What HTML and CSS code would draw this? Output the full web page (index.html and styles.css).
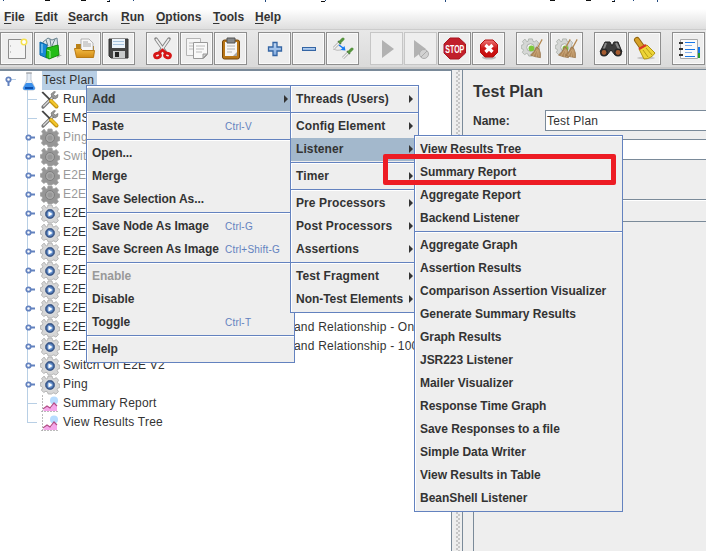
FILE: index.html
```html
<!DOCTYPE html>
<html lang="en">
<head>
<meta charset="utf-8">
<title>Test Plan</title>
<link rel="stylesheet" href="styles.css">
</head>
<body>
<svg class="defs" width="0" height="0">
  <defs>
    <radialGradient id="blue"><stop offset="0" stop-color="#b8d4f0"/><stop offset=".55" stop-color="#5f8ac6"/><stop offset="1" stop-color="#1d3668"/></radialGradient>
    <linearGradient id="plus" x2="0" y2="1"><stop offset="0" stop-color="#c5dbf5"/><stop offset="1" stop-color="#7fa9de"/></linearGradient>
    <linearGradient id="gold" x2="0" y2="1"><stop offset="0" stop-color="#f4bd45"/><stop offset="1" stop-color="#d18a14"/></linearGradient>
    <linearGradient id="red" x2="0" y2="1"><stop offset="0" stop-color="#ee7777"/><stop offset=".5" stop-color="#cd1717"/><stop offset="1" stop-color="#c60b0b"/></linearGradient>
    <symbol id="gearshape" viewBox="0 0 20 20"><path d="M8 1h4l.6 2.400 1.400.6 2.300-1.400 2.300 2.600-1.200 2 .7 1.500 1.700.4v3.400l-2 .7-.6 1.300 1.200 2.200-2.500 2.400-2.100-1.200-1.600.6L11.500 19h-3.300l-.8-2.100-1.500-.6-2.200 1.200-2.300-2.400 1.200-2.200-.6-1.300-1.700-.5v-3.400l1.800-.5.7-1.500-1.200-2.100 2.500-2.500L6.200 4l1.300-.6z"/></symbol>
    <symbol id="gear" viewBox="0 0 20 20"><use href="#gearshape" fill="#d6d6d6" stroke="#a8a8a8" stroke-width=".8"/><circle cx="10" cy="10" r="5.500" fill="#f0f0f0"/><circle cx="10" cy="10" r="4.700" fill="url(#blue)" stroke="#4a6389" stroke-width=".7"/><path d="M8.500 7.500v5l4-2.500z" fill="#fff"/></symbol>
    <symbol id="gearoff" viewBox="0 0 20 20"><use href="#gearshape" fill="#969696" stroke="#a4a4a4" stroke-width=".8"/><circle cx="10" cy="10" r="4.500" fill="#a8a8a8" stroke="#7f7f7f"/><circle cx="10" cy="10" r="2.500" fill="#989898"/></symbol>
    <symbol id="tools" viewBox="0 0 20 20"><path d="M3 17L13 7" stroke="#777" stroke-width="3.200" stroke-linecap="round"/><path d="M3.300 16.500L13 7" stroke="#ddd" stroke-width="1.200"/><path d="M12 7l-1-3 3-2.500 1.500.3-2 2.700 1.800 1.500 2.700-1.500-.5 3-2.500 1.500z" fill="#999" stroke="#666" stroke-width=".6"/><path d="M1.500 2.500l1.500-1 8 8-1.500 1z" fill="#444"/><path d="M11 11l5.500 5.500" stroke="#c29412" stroke-width="4" stroke-linecap="round"/><path d="M11 10.500l5.500 5.500" stroke="#f4c72c" stroke-width="2.300" stroke-linecap="round"/></symbol>
    <symbol id="flask" viewBox="0 0 20 20"><path d="M8 2h4v7l4 8q0 2-2 2H6q-2 0-2-2l4-8z" fill="#e6edf5" stroke="#adb9c8" stroke-width=".8"/><path d="M7 12h6l3 5q0 2-2 2H6q-2 0-2-2z" fill="#3b90ec"/><path d="M6 17h8" stroke="#0c4eac" stroke-width="2"/><path d="M7 2h6" stroke="#999"/></symbol>
    <symbol id="chart" viewBox="0 0 20 20"><circle cx="14" cy="6.500" r="4" fill="#b7dcff"/><path d="M3 17l4-5 4 2 3-5 3 3v5z" fill="#f5a5e9"/><path d="M3 15l4-3 3 2 4-5 3 3" stroke="#b34c86" stroke-width="1.200" fill="none"/><path d="M2.500 1v17.500M1 17.500h17" stroke="#a9a9a9" stroke-dasharray="2 1" stroke-width=".8"/></symbol>
    <symbol id="broom" viewBox="0 0 18 24"><path d="M17 1L11 12" stroke="#b4874f" stroke-width="1.500"/><path d="M10 10l3 2q3 6 2 11l-6-1-6-2q5-4 7-10z" fill="#b18a5b" stroke="#8b683e" stroke-width=".7"/><path d="M11 13l-5 8M12 13l-2 9M13 14v8" stroke="#dbb98b" stroke-width=".7"/></symbol>
    <symbol id="greygear" viewBox="0 0 20 20"><use href="#gearshape" fill="#d5d7d5" stroke="#b0b5b0"/><circle cx="10" cy="10" r="4" fill="#f3f3f3" stroke="#aaa"/><circle cx="11" cy="11" r="3" fill="#7cc83b"/></symbol>
    <symbol id="dropper" viewBox="0 0 12 12"><path d="M1 11l6-6" stroke="#aaa" stroke-width="2.800"/><path d="M1 11l6-6" stroke="#f3f3f3" stroke-width="1.200"/><path d="M5 4l3 3" stroke="#4f6c45" stroke-width="1.500"/><path d="M7 5l3-3" stroke="#57943f" stroke-width="3" stroke-linecap="round"/></symbol>
    <symbol id="knob" viewBox="0 0 11 7"><path d="M5 3.500h5" stroke="#6382bf" stroke-width="2"/><circle cx="3.500" cy="3.500" r="2.200" fill="#fff" stroke="#6382bf" stroke-width="1.800"/></symbol>
  </defs>
</svg>
<div class="window">
  <svg class="strip" viewBox="0 0 706 4"><path d="M45 .5h5M81 .5h5M107 1.500h3M321 1.500h4M550 .5h5M586 .5h5M612 1.500h3" stroke="#111"/><path d="M3.500 0v1M109.500 0v1M133.500 0v1M265.500 0v2M325.500 0v1M445.500 0v2M614.500 0v1M633.500 0v1M657.500 0v2" stroke="#234a80"/></svg>
  <nav class="menubar">
    <span class="m-file"><u>F</u>ile</span><span class="m-edit"><u>E</u>dit</span><span class="m-search"><u>S</u>earch</span><span class="m-run"><u>R</u>un</span><span class="m-options"><u>O</u>ptions</span><span class="m-tools"><u>T</u>ools</span><span class="m-help"><u>H</u>elp</span>
  </nav>
  <div class="toolbar">
    <div class="tools">
      <b><svg viewBox="0 0 33 33"><path d="M8.500 7.500h17v19h-17z" fill="#f4f4f4" stroke="#8d8d8d"/><path d="M10 14h1M10 20h1" stroke="#999"/><circle cx="24" cy="10" r="2.700" fill="#fff" stroke="#f6e14e" stroke-width="1.500"/></svg></b>
      <b><svg viewBox="0 0 33 33"><path d="M23 23h5l-5 3z" fill="#aaa"/><path d="M9 10l5-4 4 2 5-2 1 10H9z" fill="#dce4e8" stroke="#698390"/><path d="M12 8l2 6M16 7l1 7M21 7l-3 7" stroke="#66818c"/><path d="M6 10l7 3v13l-7-3z" fill="#1688d5" stroke="#0b67a7"/><path d="M8 12v9" stroke="#a6dcfa"/><path d="M13 16l11-3 1 10-10 4-3-2z" fill="#23bd17" stroke="#168b0d"/><path d="M13 18l3 1v7" stroke="#a5f494" fill="none"/></svg></b>
      <b><svg viewBox="0 0 33 33"><path d="M8 12h7l2 2h9v10H8z" fill="#b98116"/><path d="M13 7h8l4 4v10H13z" fill="#f7f7f7" stroke="#999" stroke-width=".7"/><path d="M15 10h5M15 12h8M15 14h8" stroke="#aaa"/><path d="M6.500 16.500h6l2 2h12l-1 7h-17z" fill="url(#gold)" stroke="#b87b15"/></svg></b>
      <b><svg viewBox="0 0 33 33"><path d="M7 7h19v19H9l-2-2z" fill="#454545" stroke="#333"/><path d="M10 7h13v9H10z" fill="#edf4fb"/><path d="M11 9.500h11M11 12.500h11" stroke="#a8c4df"/><path d="M11 19h12v7H11z" fill="#c9cbcc"/><path d="M13 20h4v5h-4z" fill="#242424"/></svg></b>
    </div>
    <div class="tools">
      <b><svg viewBox="0 0 33 33"><path d="M10 7l10 14M23 7L13 21" stroke="#858585" stroke-width="3.500" stroke-linecap="round"/><path d="M10 7l9 13M23 7l-9 13" stroke="#ededed" stroke-width="1.700"/><g fill="#ededed" stroke="#d61616" stroke-width="2.800"><ellipse cx="11.500" cy="23.500" rx="3" ry="2.200" transform="rotate(-20 11.500 23.500)"/><ellipse cx="21.500" cy="23.500" rx="3" ry="2.200" transform="rotate(20 21.500 23.500)"/></g><path d="M13 21l3.500-3 3.500 3" stroke="#d61616" stroke-width="2.500" fill="none"/></svg></b>
      <b><svg viewBox="0 0 33 33"><path d="M6.500 6.500h14v17h-14z" fill="#f5f5f5" stroke="#b4b4b4"/><path d="M13.500 10.500h14v12l-4 4h-10z" fill="#f9f9f9" stroke="#999"/><path d="M9 11h4M9 14h4M9 17h4M16 14h9M16 17h8M16 20h6" stroke="#bbb"/><path d="M27 22h-4v4z" fill="#d2d2d2" stroke="#999"/></svg></b>
      <b><svg viewBox="0 0 33 33"><rect x="8.500" y="8" width="17" height="19" rx="2" fill="#b97616" stroke="#73450b"/><path d="M11 10h12v14H11z" fill="#f6f6f6"/><path d="M13 6h8v5h-8z" fill="#85888a" stroke="#555"/><path d="M13 14h8M13 17h8M13 20h5" stroke="#b4b4b4"/><path d="M19 24l4-4v4z" fill="#a8a8a8"/></svg></b>
    </div>
    <div class="tools">
      <b><svg viewBox="0 0 33 33"><path d="M15 10.500h4v4.500h4.500v4H19v4.500h-4V19h-4.500v-4H15z" fill="url(#plus)" stroke="#3465a4" stroke-width="1.300"/></svg></b>
      <b><svg viewBox="0 0 33 33"><rect x="10.500" y="15.500" width="13" height="3" fill="url(#plus)" stroke="#3465a4"/></svg></b>
      <b><svg viewBox="0 0 33 33"><path d="M7 17q4 2 8 1" stroke="#bcbcbc" fill="none"/><use href="#dropper" x="7" y="5" width="12" height="12"/><use href="#dropper" x="16" y="15" width="12" height="12"/><path d="M13 13l4 3" stroke="#167af4" stroke-width="1.500"/><path d="M19.500 18.500l-5-.5 4-4z" fill="#167af4"/></svg></b>
    </div>
    <div class="tools">
      <b class="off"><svg viewBox="0 0 33 33"><path d="M12 8v18l12-9z" fill="#b2b2b2"/></svg></b>
      <b class="off"><svg viewBox="0 0 33 33"><path d="M10 8v18l12-9z" fill="#b2b2b2"/><circle cx="20" cy="22" r="4.500" fill="#d2d2d2" stroke="#adadad"/><path d="M17 25l6-6" stroke="#aaa"/></svg></b>
      <b><svg viewBox="0 0 33 33"><path d="M12 6h9l6.500 6v9L21 27h-9l-6-6v-9z" fill="#c11f2b" stroke="#a91520"/><text class="stop" x="16.800" y="20.500" textLength="19" lengthAdjust="spacingAndGlyphs">STOP</text></svg></b>
      <b><svg viewBox="0 0 33 33"><ellipse cx="17" cy="25.500" rx="7" ry="2" fill="#bbb"/><path d="M13 8h8l4.500 4.500v8L21 25h-8l-4.500-4.500v-8z" fill="url(#red)" stroke="#b50e0e"/><path d="M13.500 13l7 7m0-7l-7 7" stroke="#fff" stroke-width="3.200"/></svg></b>
    </div>
    <div class="tools">
      <b><svg viewBox="0 0 33 33"><use href="#greygear" x="5" y="6" width="19" height="19"/><use href="#broom" x="12" y="5" width="15" height="23"/></svg></b>
      <b><svg viewBox="0 0 33 33"><use href="#greygear" x="5" y="6" width="19" height="19"/><use href="#broom" x="6" y="5" width="15" height="23"/><use href="#broom" x="13" y="5" width="15" height="23"/></svg></b>
    </div>
    <div class="tools">
      <b><svg viewBox="0 0 33 33"><path d="M11 10h5l2 4 2-4h4l4 10-7 3-4-5-4 5-7-3z" fill="#3d3d3d" stroke="#222"/><path d="M12 11l-3 8M22 11l4 8" stroke="#888" stroke-width="2"/><circle cx="10" cy="20.500" r="4" fill="#282828"/><circle cx="24" cy="20.500" r="4" fill="#282828"/><circle cx="10" cy="20.500" r="2.400" fill="#a65c30"/><circle cx="24" cy="20.500" r="2.400" fill="#a65c30"/></svg></b>
      <b><svg viewBox="0 0 33 33"><ellipse cx="18" cy="26" rx="9" ry="1.500" fill="#c6c6c6"/><path d="M9 8l5 7" stroke="#91640d" stroke-width="6" stroke-linecap="round"/><path d="M9 8l5 7" stroke="#d7a128" stroke-width="4" stroke-linecap="round"/><path d="M11 17l8-4 8 8q-4 6-11 6z" fill="#edd537" stroke="#b29511"/><path d="M15 18l5 7M18 16l6 7" stroke="#b89b13"/><path d="M11 17l7-4" stroke="#d83724" stroke-width="2.500"/></svg></b>
    </div>
    <div class="tools">
      <b><svg viewBox="0 0 33 33"><path d="M24 15h3v6h-3z" fill="#1677e9"/><path d="M24 21h3v5h-3z" fill="#269c2c"/><path d="M8.500 7.500h17v19h-17z" fill="#fafafa" stroke="#a8a8a8"/><path d="M13 10.500h10M13 17.500h10M13 24.500h10" stroke="#1677e9"/><path d="M13 13.500h7M13 20.500h7" stroke="#83afea"/><path d="M7 11h4M7 17h4M7 23h4" stroke="#333" stroke-width="2"/><path d="M26 15h2v6h-2z" fill="#1677e9"/><path d="M26 21h2v5h-2z" fill="#269c2c"/></svg></b>
    </div>
  </div>
  <main class="workspace">
    <section class="tree">
      <div class="row root"><svg class="knob-root" viewBox="0 0 11 11"><path d="M6 4.500h5" stroke="#b8cfe5"/><path d="M3.500 6v5" stroke="#6382bf" stroke-width="2"/><circle cx="3.500" cy="4.500" r="2.200" fill="#fff" stroke="#6382bf" stroke-width="1.800"/></svg><svg class="ico"><use href="#flask"/></svg><span class="sel">Test Plan</span></div>
      <div class="branch">
        <div class="row leaf"><svg class="ico"><use href="#tools"/></svg><span>Run</span></div>
        <div class="row leaf"><svg class="ico"><use href="#tools"/></svg><span>EMS</span></div>
        <div class="row dim"><svg class="knob"><use href="#knob"/></svg><svg class="ico"><use href="#gearoff"/></svg><span>Ping</span></div>
        <div class="row dim"><svg class="knob"><use href="#knob"/></svg><svg class="ico"><use href="#gearoff"/></svg><span>Swit</span></div>
        <div class="row dim"><svg class="knob"><use href="#knob"/></svg><svg class="ico"><use href="#gearoff"/></svg><span>E2E</span></div>
        <div class="row dim"><svg class="knob"><use href="#knob"/></svg><svg class="ico"><use href="#gearoff"/></svg><span>E2E</span></div>
        <div class="row"><svg class="knob"><use href="#knob"/></svg><svg class="ico"><use href="#gear"/></svg><span>E2E</span></div>
        <div class="row"><svg class="knob"><use href="#knob"/></svg><svg class="ico"><use href="#gear"/></svg><span>E2E</span></div>
        <div class="row"><svg class="knob"><use href="#knob"/></svg><svg class="ico"><use href="#gear"/></svg><span>E2E</span></div>
        <div class="row"><svg class="knob"><use href="#knob"/></svg><svg class="ico"><use href="#gear"/></svg><span>E2E</span></div>
        <div class="row"><svg class="knob"><use href="#knob"/></svg><svg class="ico"><use href="#gear"/></svg><span>E2E</span></div>
        <div class="row"><svg class="knob"><use href="#knob"/></svg><svg class="ico"><use href="#gear"/></svg><span>E2E</span></div>
        <div class="row"><svg class="knob"><use href="#knob"/></svg><svg class="ico"><use href="#gear"/></svg><span class="wide">E2E</span><span>and Relationship - On</span></div>
        <div class="row"><svg class="knob"><use href="#knob"/></svg><svg class="ico"><use href="#gear"/></svg><span class="wide">E2E</span><span>and Relationship - 100</span></div>
        <div class="row"><svg class="knob"><use href="#knob"/></svg><svg class="ico"><use href="#gear"/></svg><span>Switch On E2E V2</span></div>
        <div class="row"><svg class="knob"><use href="#knob"/></svg><svg class="ico"><use href="#gear"/></svg><span>Ping</span></div>
        <div class="row leaf"><svg class="ico"><use href="#chart"/></svg><span>Summary Report</span></div>
        <div class="row leaf"><svg class="ico"><use href="#chart"/></svg><span>View Results Tree</span></div>
      </div>
    </section>
    <div class="divider"></div>
    <section class="editor">
      <h1>Test Plan</h1>
      <div class="field"><label>Name:</label><div class="input">Test Plan</div></div>
      <div class="field second"><label></label><div class="input"></div></div>
      <div class="variables"><div class="caption"></div></div>
    </section>
  </main>

  <div class="menu context">
    <div class="group"><div class="item on arrow">Add</div></div>
    <div class="group"><div class="item">Paste<kbd>Ctrl-V</kbd></div></div>
    <div class="group"><div class="item">Open...</div><div class="item">Merge</div><div class="item">Save Selection As...</div></div>
    <div class="group"><div class="item">Save Node As Image<kbd>Ctrl-G</kbd></div><div class="item">Save Screen As Image<kbd>Ctrl+Shift-G</kbd></div></div>
    <div class="group"><div class="item disabled">Enable</div><div class="item">Disable</div><div class="item">Toggle<kbd>Ctrl-T</kbd></div></div>
    <div class="group"><div class="item">Help</div></div>
  </div>
  <div class="menu add">
    <div class="group"><div class="item arrow">Threads (Users)</div></div>
    <div class="group"><div class="item arrow">Config Element</div><div class="item on arrow">Listener</div></div>
    <div class="group"><div class="item arrow">Timer</div></div>
    <div class="group"><div class="item arrow">Pre Processors</div><div class="item arrow">Post Processors</div><div class="item arrow">Assertions</div></div>
    <div class="group"><div class="item arrow">Test Fragment</div><div class="item arrow tight">Non-Test Elements</div></div>
  </div>
  <div class="menu listener">
    <div class="group"><div class="item">View Results Tree</div><div class="item">Summary Report</div><div class="item">Aggregate Report</div><div class="item">Backend Listener</div></div>
    <div class="group"><div class="item">Aggregate Graph</div><div class="item">Assertion Results</div><div class="item">Comparison Assertion Visualizer</div><div class="item">Generate Summary Results</div><div class="item">Graph Results</div><div class="item">JSR223 Listener</div><div class="item">Mailer Visualizer</div><div class="item">Response Time Graph</div><div class="item">Save Responses to a file</div><div class="item">Simple Data Writer</div><div class="item">View Results in Table</div><div class="item">BeanShell Listener</div></div>
  </div>
  <div class="callout"></div>
</div>
</body>
</html>
```
FILE: styles.css
```css
* { box-sizing: border-box; }
body { margin: 0; font: 12px "Liberation Sans", Arial, sans-serif; color: #333; background: #eee; overflow: hidden; }
.defs { position: absolute; }
.window { position: relative; width: 706px; height: 551px; display: flex; flex-direction: column; overflow: hidden; }

.strip { display: block; width: 706px; height: 4px; background: #fff; flex: none; }
.menubar { height: 26px; flex: none; display: flex; padding-left: 4px; background: linear-gradient(#fff 20%, #dedede); border-bottom: 1px solid #ccc; font-weight: bold; line-height: 26px; }
.menubar u { text-underline-offset: 2px; text-decoration-thickness: 1px; }
.m-file { width: 31px; } .m-edit { width: 33px; } .m-search { width: 53px; } .m-run { width: 35px; }
.m-options { width: 57px; } .m-tools { width: 42px; }

.toolbar { height: 39px; flex: none; display: flex; gap: 11px; padding-top: 2px; background: linear-gradient(#e8e8e8, #dadada); border-bottom: 2px solid #c8c8c8; }
.tools { display: flex; gap: 1px; }
.tools b { width: 33px; height: 33px; flex: none; border: 1px solid #8e8e8e; background: #eee; box-shadow: inset 0 0 0 1px #fafafa; }
.tools b.off { border-color: #c6c6c6; box-shadow: none; }
.tools svg { display: block; width: 33px; height: 33px; margin: -1px; }
.stop { font: bold 10px "Liberation Sans", sans-serif; fill: #fff; text-anchor: middle; }

.workspace { flex: 1; display: flex; border-top: 1px solid #7a8a99; min-height: 0; }
.tree { width: 452px; flex: none; background: #fff; border-top: 1px solid #7a8a99; border-right: 1px solid #7a8a99; letter-spacing: .2px; overflow: hidden; white-space: nowrap; }
.row { height: 19px; display: flex; align-items: center; line-height: 19px; }
.root { padding-left: 5px; }
.knob-root { width: 11px; height: 11px; flex: none; margin: 0 3px 0 0; }
.ico { width: 20px; height: 20px; flex: none; }
.sel { background: #b8cfe5; height: 19px; line-height: 18px; width: 55px; padding-left: 1px; margin-left: 3px; }
.branch { margin-left: 27px; background: linear-gradient(#b8cfe5, #b8cfe5) 0 0 / 1px 333px no-repeat; }
.branch .ico { margin: 0 3px; }
.knob { width: 11px; height: 7px; flex: none; margin-left: -3px; margin-right: 1px; }
.branch .row { padding-left: 1px; }
.leaf::before { content: ""; width: 9px; height: 1px; background: #b8cfe5; flex: none; }
.dim { color: #999; }
.wide { width: 231px; flex: none; }

.divider { width: 10px; flex: none; background: radial-gradient(circle at 1px 1px, #999 .6px, transparent .8px) 2px 0 / 4px 4px repeat-y, radial-gradient(circle at 1px 1px, #999 .6px, transparent .8px) 0 2px / 4px 4px repeat-y, #eee; background-clip: padding-box; border: solid #eee; border-width: 0 2px 0 4px; }
.editor { flex: 1; border-left: 1px solid #7a8a99; padding: 10px 0 0 10px; display: flex; flex-direction: column; font-weight: bold; }
h1 { margin: 0; font-size: 16px; line-height: 24px; height: 30px; }
.field { display: flex; height: 21px; line-height: 23px; }
.field label { width: 72px; }
.input { flex: 1; background: #fff; border: 1px solid #7a8a99; border-right: 0; font-weight: normal; line-height: 21px; padding-left: 1px; letter-spacing: .2px; }
.second { margin-top: 8px; }
.variables { flex: 1; margin-top: 39px; border: 1px solid #7a8a99; border-right: 0; border-bottom: 0; }
.caption { height: 22px; border-bottom: 1px solid #7a8a99; box-shadow: inset 0 1px #fff; }

.menu { position: absolute; border: solid #6382bf; border-width: 0 1px 1px; background: #eee; font-weight: bold; white-space: nowrap; }
.context { left: 86px; top: 85px; width: 209px; }
.add { left: 290px; top: 85px; width: 129px; }
.listener { left: 414px; top: 135px; width: 209px; }
.group { border-top: 1px solid #6382bf; padding: 2px 0 1px; box-shadow: inset 1px 1px #fff; }
.item { height: 23px; line-height: 23px; padding-left: 5px; position: relative; display: flex; letter-spacing: -.04px; }
.on { background: #a3b8cc; }
.disabled { color: #999; }
.item kbd { position: absolute; left: 138px; font: 10px/23px "Liberation Sans", sans-serif; color: #6382bf; letter-spacing: .2px; }
.arrow::after { content: ""; position: absolute; right: 5px; top: 7px; border: solid transparent; border-width: 4px 0 4px 4px; border-left-color: #333; }
.context .arrow::after { right: 6px; }
.add .item { letter-spacing: .1px; }
.add .tight { letter-spacing: -.04px; }
.callout { position: absolute; left: 383px; top: 154px; width: 233px; height: 31px; border: 5px solid #ed1c24; border-radius: 2px; }
```
